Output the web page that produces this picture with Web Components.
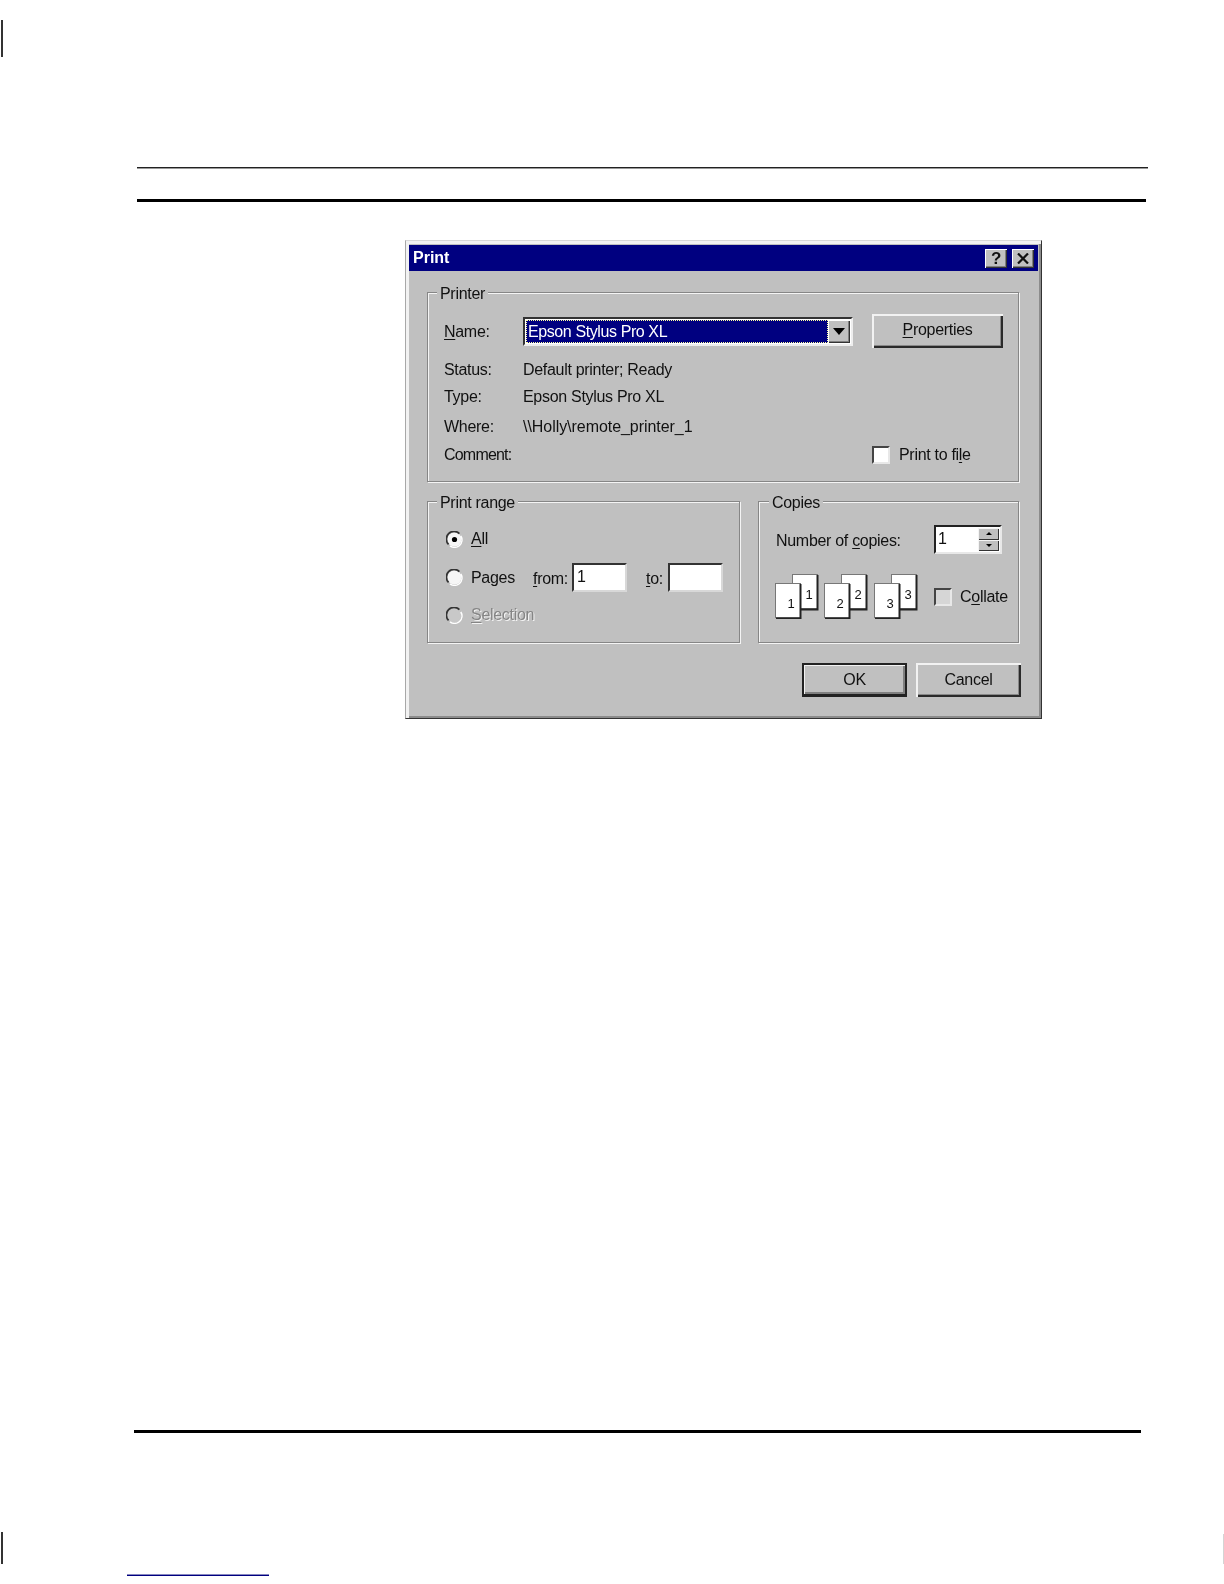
<!DOCTYPE html>
<html lang="en">
<head>
<meta charset="utf-8">
<title>Print</title>
<style>
  html, body { margin: 0; background: #fff; }
</style>
</head>
<body>
<doc-page></doc-page>
<script>
// shared text look for everything inside the dialog
const uiText = `font: 16px/24px "Liberation Sans", Arial, sans-serif; letter-spacing: -0.3px; color: #111;`;

function define(tag, render) {
    customElements.define(tag, class extends HTMLElement {
        connectedCallback() {
            if (this.shadowRoot) return;
            this.attachShadow({ mode: 'open' });
            this.shadowRoot.innerHTML = render(this);
        }
    });
}

define('win-window', el => `
<style>
    :host { display: block; box-sizing: border-box; width: 637px; height: 479px; padding: 4px 3px 0 3px;
        background: #c0c0c0; border: 1px solid; border-color: #d8d8d8 #333 #333 #a8a8a8;
        box-shadow: inset 3px 3px 0 #f2f2f2, inset -2px -2px 0 #8c8c8c; filter: blur(.4px); ${uiText} }
    .bar { display: flex; align-items: center; height: 26px; padding: 0 4px 0 4px; background: #000080; }
    .name { flex: 1; font-weight: bold; letter-spacing: 0; color: #fff; }
    .btns { display: flex; gap: 5px; }
</style>
<div class="bar"><span class="name">${el.getAttribute('caption')}</span><span class="btns"><slot name="controls"></slot></span></div>
<slot></slot>`);

define('win-caption-btn', el => `
<style>
    :host { display: flex; align-items: center; justify-content: center; box-sizing: border-box; width: 22px; height: 19px;
        background: #c0c0c0; box-shadow: inset 1px 1px 0 #fff, inset -1px -1px 0 #333, inset -2px -2px 0 #808080;
        font: bold 17px/19px "Liberation Sans", Arial, sans-serif; color: #111; }
</style>
<slot></slot>`);

define('win-group', el => `
<style>
    :host { display: block; position: relative; box-sizing: border-box; border: 1px solid #868686;
        box-shadow: 1px 1px 0 #f4f4f4, inset 1px 1px 0 #f4f4f4; }
    .legend { position: absolute; left: var(--legend-left, 9px); top: -9px; padding: 0 3px; background: #c0c0c0; line-height: 20px; }
</style>
<span class="legend">${el.getAttribute('label')}</span>
<slot></slot>`);

define('win-button', el => `
<style>
    :host { display: flex; align-items: center; justify-content: center; box-sizing: border-box; background: #c0c0c0;
        box-shadow: inset 2px 2px 0 #f2f2f2, inset -2px -2px 0 #2a2a2a, inset -3px -3px 0 #888; }
    :host([default]) { border: 2px solid #222; border-bottom-width: 3px;
        box-shadow: inset 1px 1px 0 #f2f2f2, inset -2px -2px 0 #808080; }
</style>
<slot></slot>`);

define('win-field', el => `
<style>
    :host { display: block; box-sizing: border-box; width: 55px; height: 29px; padding-left: 3px; background: #fff;
        border: 2px solid; border-color: #333 #d8d8d8 #d8d8d8 #333; line-height: 23px; }
</style>
<slot></slot>`);

define('win-combo', el => `
<style>
    :host { display: flex; box-sizing: border-box; width: 330px; height: 29px; padding: 1px; background: #fff;
        border: 2px solid; border-color: #333 #eee #eee #333; }
    .sel { flex: 1; box-sizing: border-box; padding-left: 2px; background: #000080; color: #fff; line-height: 23px;
        letter-spacing: -0.4px; outline: 1px dotted #ffffa0; outline-offset: -1px; }
    .drop { display: flex; align-items: center; justify-content: center; width: 22px; background: #c0c0c0;
        box-shadow: inset 1px 1px 0 #fff, inset -1px -1px 0 #333, inset -2px -2px 0 #808080; }
</style>
<div class="sel"><slot></slot></div>
<div class="drop"><svg width="12" height="7" viewBox="0 0 12 7"><path d="M0 0h12L6 7z" fill="#000"/></svg></div>`);

define('win-spin', el => `
<style>
    :host { display: flex; box-sizing: border-box; width: 68px; height: 29px; background: #fff;
        border: 2px solid; border-color: #222 #e8e8e8 #e8e8e8 #222; line-height: 23px; }
    .val { flex: 1; padding-left: 2px; }
    .arrows { display: flex; flex-direction: column; width: 21px; margin: 1px 1px 1px 0; }
    .arrows div { flex: 1; display: flex; align-items: center; justify-content: center; background: #c0c0c0;
        box-shadow: inset 1px 1px 0 #f4f4f4, inset -1px -1px 0 #333; }
</style>
<div class="val"><slot></slot></div>
<div class="arrows">
    <div><svg width="6" height="3" viewBox="0 0 6 3"><path d="M3 0l3 3H0z" fill="#000"/></svg></div>
    <div><svg width="6" height="3" viewBox="0 0 6 3"><path d="M0 0h6L3 3z" fill="#000"/></svg></div>
</div>`);

define('win-check', el => `
<style>
    :host { display: inline-flex; align-items: center; gap: var(--check-gap, 9px); }
    .box { box-sizing: border-box; width: 18px; height: 18px; background: ${el.hasAttribute('dim') ? '#d6d6d6' : '#fff'};
        border: 2px solid; border-color: #444 #e8e8e8 #e8e8e8 #444; }
</style>
<span class="box"></span><span><slot></slot></span>`);

define('win-radio', el => `
<style>
    :host { display: inline-flex; align-items: center; gap: 8px; }
    :host([disabled]) .txt { color: #858585; text-shadow: 1px 1px 0 #f4f4f4; }
    svg { display: block; }
</style>
<svg width="17" height="17" viewBox="0 0 17 17">
    <circle cx="8.5" cy="8.5" r="7" fill="${el.hasAttribute('disabled') ? '#c8c8c8' : '#f6f6f6'}"/>
    <path d="M2.6 13.4A7.2 7.2 0 0 1 13.4 2.6" fill="none" stroke="#333" stroke-width="1.7"/>
    <path d="M14.8 5A7.4 7.4 0 0 1 4 14.8" fill="none" stroke="#fff" stroke-width="1.5"/>
    ${el.hasAttribute('checked') ? '<circle cx="8.5" cy="8.5" r="2.6" fill="#000"/>' : ''}
</svg><span class="txt"><slot></slot></span>`);

// little pair of overlapping sheets shown for the collate preview
define('page-stack', el => {
    const n = el.getAttribute('n');
    const sheet = (x, y) => `
        <rect x="${x + .5}" y="${y + .5}" width="25" height="34" fill="#fff" stroke="#777"/>
        <path d="M${x + 25.5} ${y + 1}v34.5H${x + 1}" fill="none" stroke="#222" stroke-width="2"/>`;
    return `
<style>
    :host { display: block; width: 44px; height: 45px; }
    svg { display: block; }
    text { font: 13px "Liberation Sans", Arial, sans-serif; fill: #111; text-anchor: middle; }
</style>
<svg width="44" height="45" viewBox="0 0 44 45">
    ${sheet(17, 0)}<text x="34" y="25">${n}</text>
    ${sheet(0, 9)}<text x="16" y="34">${n}</text>
</svg>`;
});

define('print-dialog', el => `
<style>
    :host { display: block; }
    .body { padding: 21px 0 0 18px; }
    .printer { width: 592px; height: 190px; padding: 21px 0 0 16px; }
    .pgrid { display: grid; grid-template-columns: 79px 349px 131px; align-items: center; }
    .pgrid .wide { grid-column: 2 / -1; }
    .pgrid .head { height: 33px; display: flex; align-items: center; padding-top: 2px; box-sizing: border-box; }
    .m10 { margin-top: 10px; } .m3 { margin-top: 3px; } .m6 { margin-top: 6px; }
    .pgrid win-button { width: 131px; height: 34px; padding-bottom: 2px; }
    .where { letter-spacing: -0.05px; }
    .comment { letter-spacing: -0.8px; padding-top: 1px; }
    .mid { display: flex; gap: 18px; margin-top: 19px; }
    .range { width: 313px; height: 142px; padding: 25px 0 0 18px; }
    .row { display: flex; align-items: center; }
    .pages { height: 29px; margin: 12px 0 11px; }
    .pages win-radio { width: 87px; }
    .from { width: 39px; padding-top: 3px; }
    .to { width: 22px; margin-left: 19px; padding-top: 3px; }
    .copies { width: 261px; height: 142px; padding: 23px 0 0 17px; --legend-left: 10px; }
    .count { width: 158px; padding-top: 2px; }
    .stacks { margin: 20px 0 0 -1px; --check-gap: 8px; }
    .stacks page-stack + page-stack { margin-left: 5px; }
    .stacks page-stack:nth-child(3) { margin-left: 6px; }
    .stacks win-check { margin-left: 16px; }
    .actions { display: flex; gap: 9px; margin: 20px 0 0 375px; }
    .actions win-button { width: 105px; height: 34px; }
    u { text-underline-offset: 2px; }
</style>
<win-window caption="Print">
    <win-caption-btn slot="controls">?</win-caption-btn>
    <win-caption-btn slot="controls"><svg width="12" height="11" viewBox="0 0 12 11"><path d="M1 .5l10 10M11 .5l-10 10" stroke="#111" stroke-width="2.2" fill="none"/></svg></win-caption-btn>
    <div class="body">
        <win-group class="printer" label="Printer">
            <div class="pgrid">
                <span class="head"><span><u>N</u>ame:</span></span>
                <win-combo>Epson Stylus Pro XL</win-combo>
                <win-button><span><u>P</u>roperties</span></win-button>
                <span class="m10">Status:</span><span class="m10 wide">Default printer; Ready</span>
                <span class="m3">Type:</span><span class="m3 wide">Epson Stylus Pro XL</span>
                <span class="m6">Where:</span><span class="m6 wide where">\\\\Holly\\remote_printer_1</span>
                <span class="m3 comment">Comment:</span><span class="m3"></span>
                <win-check class="m3">Print to fi<u>l</u>e</win-check>
            </div>
        </win-group>
        <div class="mid">
            <win-group class="range" label="Print range">
                <div class="row"><win-radio checked><u>A</u>ll</win-radio></div>
                <div class="row pages">
                    <win-radio>Pa<u>g</u>es</win-radio>
                    <span class="from"><u>f</u>rom:</span><win-field>1</win-field>
                    <span class="to"><u>t</u>o:</span><win-field></win-field>
                </div>
                <div class="row"><win-radio disabled><u>S</u>election</win-radio></div>
            </win-group>
            <win-group class="copies" label="Copies">
                <div class="row">
                    <span class="count">Number of <u>c</u>opies:</span><win-spin>1</win-spin>
                </div>
                <div class="row stacks">
                    <page-stack n="1"></page-stack><page-stack n="2"></page-stack><page-stack n="3"></page-stack>
                    <win-check dim>C<u>o</u>llate</win-check>
                </div>
            </win-group>
        </div>
        <div class="actions">
            <win-button default>OK</win-button>
            <win-button>Cancel</win-button>
        </div>
    </div>
</win-window>`);

define('doc-page', el => `
<style>
    :host { display: block; height: 1584px; overflow: hidden; }
    .top-mark { width: 2px; height: 37px; margin: 20px 0 0 1px; background: #333; }
    .rule-thin { width: 1011px; height: 2px; margin: 110px 0 0 137px; background: linear-gradient(#222 50%, #999 50%); }
    .rule-thick { width: 1009px; height: 3px; margin: 30px 0 0 137px; background: #000; }
    print-dialog { margin: 38px 0 0 405px; width: 637px; }
    .rule-foot { width: 1007px; height: 3px; margin: 711px 0 0 134px; background: #000; }
    .marks { display: flex; justify-content: space-between; align-items: flex-start; margin-top: 99px; height: 32px; padding-left: 1px; }
    .marks .l { width: 2px; height: 32px; background: #333; }
    .marks .r { width: 1px; height: 30px; margin-top: 2px; background: #d4d4d4; }
    .link-line { width: 142px; height: 2px; margin: 10px 0 0 127px; background: linear-gradient(#8888c0 50%, #000080 50%); }
</style>
<div class="top-mark"></div>
<div class="rule-thin"></div>
<div class="rule-thick"></div>
<print-dialog></print-dialog>
<div class="rule-foot"></div>
<div class="marks"><div class="l"></div><div class="r"></div></div>
<div class="link-line"></div>`);
</script>
</body>
</html>
